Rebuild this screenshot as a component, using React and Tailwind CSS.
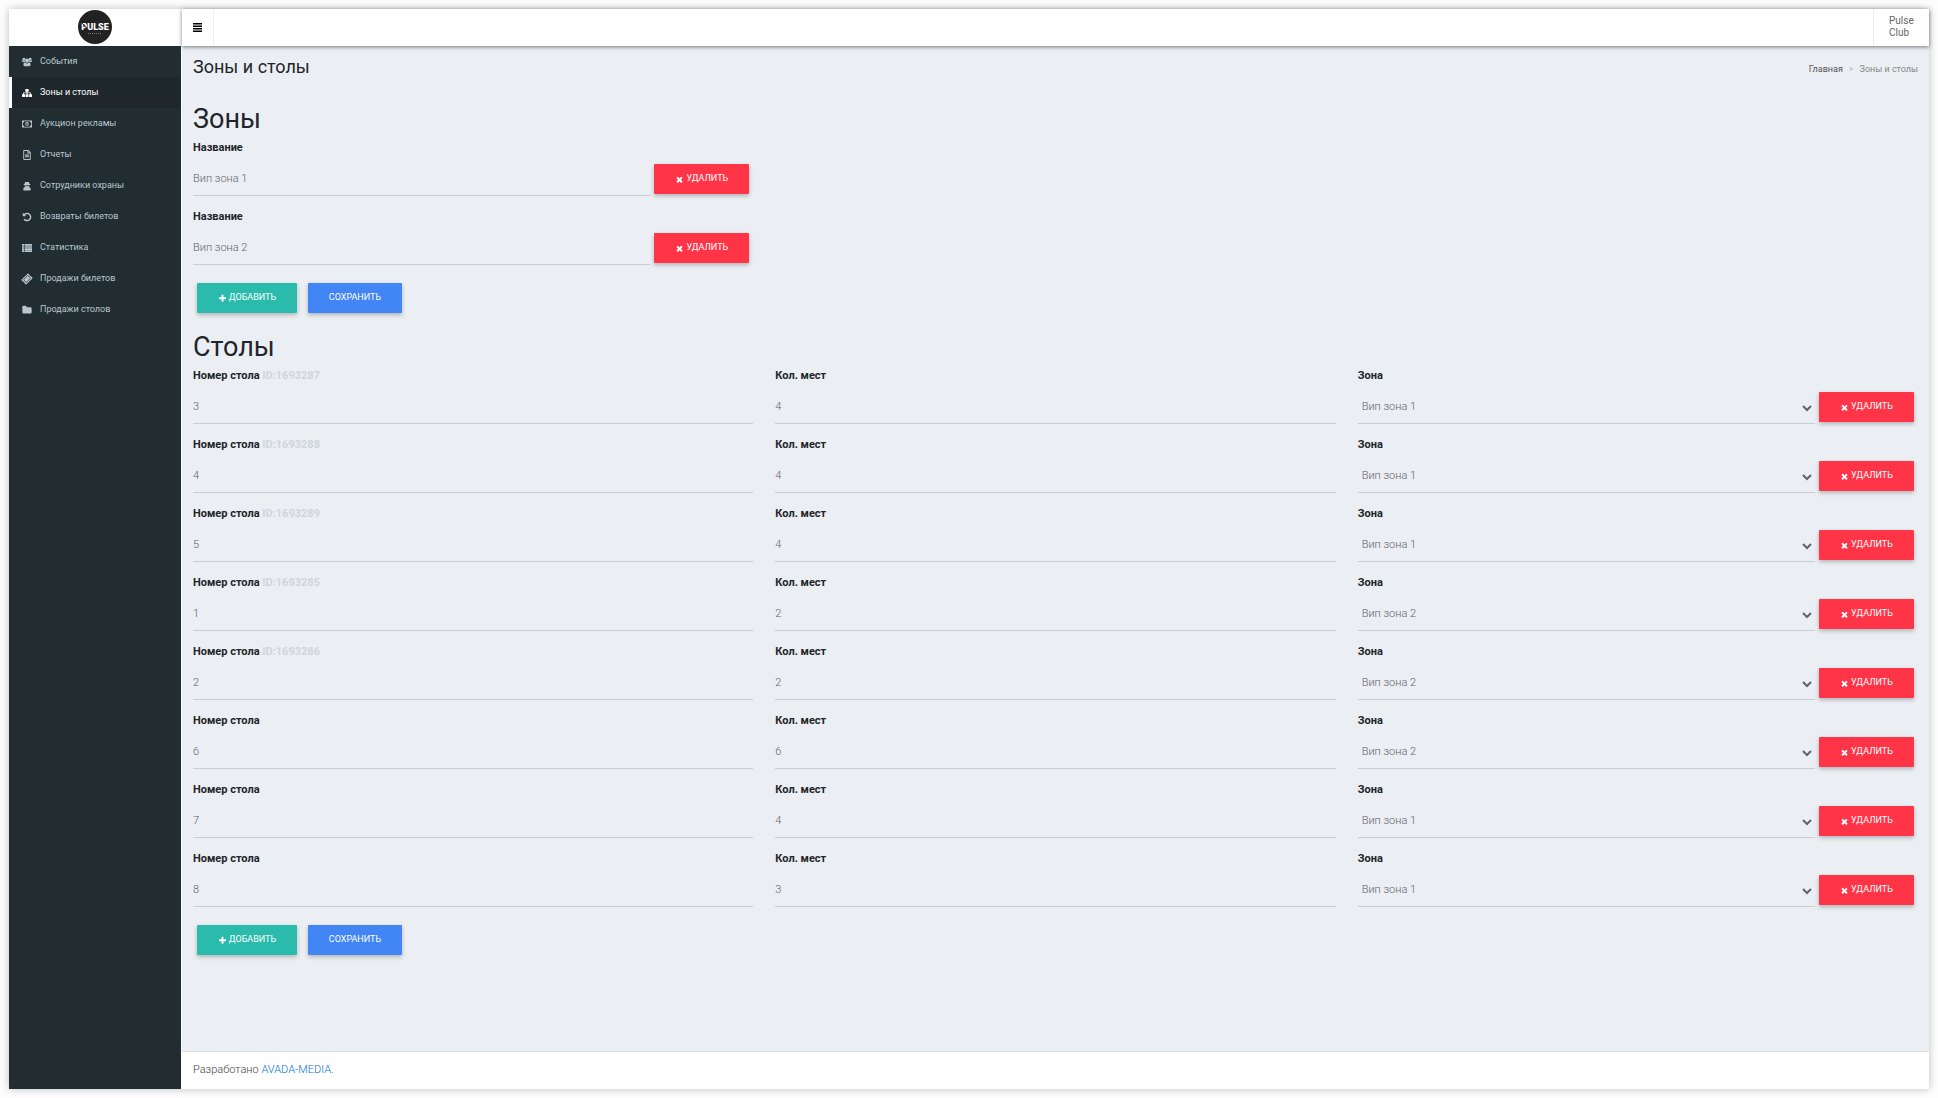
import React, { useState } from 'react';
import { FaRegFileAlt, FaTicketAlt } from 'react-icons/fa';

const Icon = ({ children, className = 'size-[10px]' }) => (
  <svg viewBox="0 0 1792 1792" fill="currentColor" className={className} aria-hidden="true">
    {children}
  </svg>
);

const UsersIcon = () => (
  <Icon>
    <circle cx="896" cy="640" r="370" />
    <circle cx="340" cy="390" r="250" />
    <circle cx="1452" cy="390" r="250" />
    <path d="M500 960q180 190 396 190t396-190q250 90 250 440 0 264-260 264H510q-260 0-260-264 0-350 250-440z" />
    <path d="M0 800q0-190 130-230 200 130 330 60 10 180 110 260H150Q0 890 0 800zM1792 800q0-190-130-230-200 130-330 60-10 180-110 260h420q150 0 150-90z" />
  </Icon>
);

const SitemapIcon = () => (
  <Icon>
    <path d="M660 160h472q60 0 60 60v400q0 60-60 60h-156v140h530q100 0 100 100v200h126q60 0 60 60v356q0 60-60 60h-420q-60 0-60-60v-356q0-60 60-60h134V950H976v170h126q60 0 60 60v356q0 60-60 60H690q-60 0-60-60v-356q0-60 60-60h126V950H346v170h134q60 0 60 60v356q0 60-60 60H60q-60 0-60-60v-356q0-60 60-60h126V920q0-100 100-100h530V680H660q-60 0-60-60V220q0-60 60-60z" />
  </Icon>
);

const MoneyIcon = () => (
  <Icon>
    <path
      fillRule="evenodd"
      d="M0 256h1792v1280H0zM400 400q0 260-250 260v470q250 0 250 260h992q0-260 250-260V660q-250 0-250-260z"
    />
    <path fillRule="evenodd" d="M896 480q300 0 300 416t-300 416-300-416 300-416zM840 660l-130 110 70 80 50-40v250h-90v110h320v-110h-90V660z" />
  </Icon>
);

const SecretIcon = () => (
  <Icon>
    <path d="M600 130q296 90 592 0 110 180 150 400 200 50 200 100 0 60-220 110 0 200-120 330 380 90 380 420 0 214-240 214H450q-240 0-240-214 0-330 380-420-120-130-120-330-220-50-220-110 0-50 200-100 40-220 150-400z" />
    <path d="M560 760h280l56 60 56-60h280q-20 160-170 160-130 0-166-100-36 100-166 100-150 0-170-160z" fill="#222d32" />
  </Icon>
);

const UndoIcon = () => (
  <Icon>
    <path d="M1664 896q0 156-61 298t-164 245-245 164-298 61q-172 0-327-72.5t-264-204.5q-7-10-6.5-22.5t8.5-20.5l137-138q10-9 25-9 16 2 23 12 73 95 179 147t225 52q104 0 198.5-40.5t163.5-109.5 109.5-163.5 40.5-198.5-40.5-198.5-109.5-163.5-163.5-109.5-198.5-40.5q-98 0-188 35.5t-160 101.5l137 138q31 30 14 69-17 40-59 40h-448q-26 0-45-19t-19-45v-448q0-42 40-59 39-17 69 14l130 129q107-101 244.5-156.5t284.5-55.5q156 0 298 61t245 164 164 245 61 298z" />
  </Icon>
);

const ListIcon = () => (
  <Icon>
    <path d="M0 192h380v300H0zM480 192h1312v300H480zM0 562h380v300H0zM480 562h1312v300H480zM0 932h380v300H0zM480 932h1312v300H480zM0 1302h380v300H0zM480 1302h1312v300H480z" />
  </Icon>
);

const FolderIcon = () => (
  <Icon>
    <path d="M1728 608v704q0 92-66 158t-158 66h-1216q-92 0-158-66t-66-158v-960q0-92 66-158t158-66h320q92 0 158 66t66 158v32h672q92 0 158 66t66 158z" />
  </Icon>
);

const FileIcon = () => <FaRegFileAlt className="size-[10px]" />;

const TicketIcon = () => <FaTicketAlt className="size-[10px] -rotate-45" />;

const PlusIcon = () => (
  <Icon className="size-[9px]">
    <path d="M1600 736v192q0 40-28 68t-68 28h-416v416q0 40-28 68t-68 28h-192q-40 0-68-28t-28-68v-416h-416q-40 0-68-28t-28-68v-192q0-40 28-68t68-28h416v-416q0-40 28-68t68-28h192q40 0 68 28t28 68v416h416q40 0 68 28t28 68z" />
  </Icon>
);

const TimesIcon = () => (
  <Icon className="size-[9px]">
    <path d="M1490 1322q0 40-28 68l-136 136q-28 28-68 28t-68-28l-294-294-294 294q-28 28-68 28t-68-28l-136-136q-28-28-28-68t28-68l294-294-294-294q-28-28-28-68t28-68l136-136q28-28 68-28t68 28l294 294 294-294q28-28 68-28t68 28l136 136q28 28 28 68t-28 68l-294 294 294 294q28 28 28 68z" />
  </Icon>
);

const menuItems = [
  { title: 'События', icon: UsersIcon },
  { title: 'Зоны и столы', icon: SitemapIcon, active: true },
  { title: 'Аукцион рекламы', icon: MoneyIcon },
  { title: 'Отчеты', icon: FileIcon },
  { title: 'Сотрудники охраны', icon: SecretIcon },
  { title: 'Возвраты билетов', icon: UndoIcon },
  { title: 'Статистика', icon: ListIcon },
  { title: 'Продажи билетов', icon: TicketIcon },
  { title: 'Продажи столов', icon: FolderIcon },
];

const initialZones = [
  { id: 1, name: 'Вип зона 1' },
  { id: 2, name: 'Вип зона 2' },
];

const initialTables = [
  { key: 1, id: '1693287', number: '3', seats: '4', zone: '1' },
  { key: 2, id: '1693288', number: '4', seats: '4', zone: '1' },
  { key: 3, id: '1693289', number: '5', seats: '4', zone: '1' },
  { key: 4, id: '1693285', number: '1', seats: '2', zone: '2' },
  { key: 5, id: '1693286', number: '2', seats: '2', zone: '2' },
  { key: 6, number: '6', seats: '6', zone: '2' },
  { key: 7, number: '7', seats: '4', zone: '1' },
  { key: 8, number: '8', seats: '3', zone: '1' },
];

const rowClass = 'grid h-[69px] grid-cols-3 gap-x-[22px] pt-[3px]';
const fieldClass =
  'block w-full h-8 border-b border-[#c9cdd1] bg-transparent pb-[3px] text-[11px] font-light text-[#5f656b] outline-none';
const labelClass = 'block text-[11px] leading-4 font-bold text-[#212529]';
const buttonClass =
  'flex h-[30px] shrink-0 items-center justify-center gap-[2px] rounded-[1px] text-[9px] text-white uppercase shadow-[0_2px_4px_rgba(0,0,0,0.25)]';

const Logo = () => (
  <svg width="34" height="34" viewBox="0 0 34 34" role="img" aria-label="Pulse">
    <circle cx="17" cy="17" r="17" fill="#222" />
    <text x="17" y="20" textAnchor="middle" fill="#fff" fontSize="9" fontWeight="900" fontFamily="Roboto, sans-serif">
      PULSE
    </text>
    <path d="M4 13l6 7" stroke="#222" strokeWidth="1" />
    <path d="M10 23.5h14" stroke="#777" strokeWidth="1" strokeDasharray="1 1" />
  </svg>
);

const Sidebar = () => (
  <aside className="flex w-[173px] shrink-0 flex-col border-r border-white bg-[#222d32]">
    <a href="#" className="flex h-[37px] items-center justify-center bg-white pb-px">
      <Logo />
    </a>
    <nav>
      <ul>
        {menuItems.map(({ title, icon: ItemIcon, active }) => (
          <li key={title}>
            <a
              href="#"
              className={`flex h-[31px] items-center gap-2 border-l-3 pl-[10px] text-[9px] ${
                active ? 'border-white bg-[#1e282c] text-white' : 'border-transparent text-[#b8c7ce]'
              }`}
            >
              <ItemIcon />
              {title}
            </a>
          </li>
        ))}
      </ul>
    </nav>
  </aside>
);

const DeleteButton = ({ onClick }) => (
  <button type="button" onClick={onClick} className={`${buttonClass} w-[95px] bg-[#ff3547]`}>
    <TimesIcon />
    Удалить
  </button>
);

const FormActions = ({ onAdd }) => (
  <div className="flex gap-[11px] pt-2 pl-1">
    <button type="button" onClick={onAdd} className={`${buttonClass} w-[100px] bg-[#2bbbad]`}>
      <PlusIcon />
      Добавить
    </button>
    <button type="submit" className={`${buttonClass} w-[94px] bg-[#4285f4]`}>
      Сохранить
    </button>
  </div>
);

const TextField = ({ id, label, value, onChange }) => (
  <div>
    <label htmlFor={id} className={labelClass}>
      {label}
    </label>
    <div className="pt-2">
      <input id={id} type="text" value={value} onChange={(e) => onChange(e.target.value)} className={fieldClass} />
    </div>
  </div>
);

const App = () => {
  const [zones, setZones] = useState(initialZones);
  const [tables, setTables] = useState(initialTables);

  const updateZone = (id, name) => {
    setZones(zones.map((zone) => (zone.id === id ? { ...zone, name } : zone)));
  };

  const updateTable = (key, field, value) => {
    setTables(tables.map((table) => (table.key === key ? { ...table, [field]: value } : table)));
  };

  const handleSubmit = (e) => e.preventDefault();

  return (
    <div className="min-h-screen bg-[#fdfdfd] p-[9px] font-[Roboto,sans-serif]">
      <div className="flex min-h-[calc(100vh-18px)] shadow-[0_0_8px_rgba(0,0,0,0.25)]">
        <Sidebar />

        <div className="flex min-w-0 flex-1 flex-col bg-[#ebeef3]">
          <header className="flex h-[37px] items-stretch justify-between bg-white shadow-[0_1px_4px_rgba(0,0,0,0.5)]">
            <button type="button" aria-label="Меню" className="border-r border-[#eee] px-[11px] text-black">
              <svg viewBox="0 0 9 9" fill="currentColor" className="size-[9px]" aria-hidden="true">
                <path d="M0 0h9v1.4H0zM0 2.5h9v1.4H0zM0 5h9v1.4H0zM0 7.5h9v1.4H0z" />
              </svg>
            </button>
            <a
              href="#"
              className="flex w-14 items-center border-l border-[#eee] pb-[2px] pl-[15px] text-[10px] leading-3 text-[#666]"
            >
              Pulse
              <br />
              Club
            </a>
          </header>

          <main className="flex-1 px-[11px]">
            <div className="flex justify-between pt-[9px]">
              <h1 className="text-[18px] leading-6 text-[#212529]">Зоны и столы</h1>
              <nav className="flex gap-[6px] pt-2 text-[9px] leading-3">
                <a href="#" className="text-[#555]">
                  Главная
                </a>
                <span className="text-[#bbb]">&gt;</span>
                <span className="text-[#888]">Зоны и столы</span>
              </nav>
            </div>

            <form onSubmit={handleSubmit} className="pt-[22px]">
              <h2 className="text-[27px] leading-9 text-[#212529]">Зоны</h2>
              {zones.map((zone) => (
                <div key={zone.id} className={rowClass}>
                  <div className="flex items-end gap-1 self-start pr-1">
                    <div className="flex-1">
                      <TextField
                        id={`zone-${zone.id}`}
                        label="Название"
                        value={zone.name}
                        onChange={(value) => updateZone(zone.id, value)}
                      />
                    </div>
                    <div className="pb-[2px]">
                      <DeleteButton onClick={() => setZones(zones.filter((z) => z.id !== zone.id))} />
                    </div>
                  </div>
                </div>
              ))}
              <FormActions onAdd={() => setZones([...zones, { id: Date.now(), name: '' }])} />
            </form>

            <form onSubmit={handleSubmit} className="pt-4">
              <h2 className="text-[27px] leading-9 text-[#212529]">Столы</h2>
              {tables.map((table) => (
                <div key={table.key} className={rowClass}>
                  <TextField
                    id={`number-${table.key}`}
                    label={
                      <>
                        Номер стола {table.id && <span className="text-[#d0d5db]">ID:{table.id}</span>}
                      </>
                    }
                    value={table.number}
                    onChange={(value) => updateTable(table.key, 'number', value)}
                  />
                  <TextField
                    id={`seats-${table.key}`}
                    label="Кол. мест"
                    value={table.seats}
                    onChange={(value) => updateTable(table.key, 'seats', value)}
                  />
                  <div className="flex items-end gap-1 self-start pr-1">
                    <div className="flex-1">
                      <label htmlFor={`table-zone-${table.key}`} className={labelClass}>
                        Зона
                      </label>
                      <div className="pt-2">
                        <select
                          id={`table-zone-${table.key}`}
                          value={table.zone}
                          onChange={(e) => updateTable(table.key, 'zone', e.target.value)}
                          className={fieldClass}
                        >
                          {zones.map((zone) => (
                            <option key={zone.id} value={zone.id}>
                              {zone.name}
                            </option>
                          ))}
                        </select>
                      </div>
                    </div>
                    <div className="pb-[2px]">
                      <DeleteButton onClick={() => setTables(tables.filter((t) => t.key !== table.key))} />
                    </div>
                  </div>
                </div>
              ))}
              <FormActions
                onAdd={() => setTables([...tables, { key: Date.now(), number: '', seats: '', zone: '1' }])}
              />
            </form>
          </main>

          <footer className="flex h-[38px] items-center border-t border-[#d9dee4] bg-white pl-[11px] text-[11px] font-light text-[#444]">
            <p>
              Разработано{' '}
              <a href="#" className="text-[#0275d8]">
                AVADA-MEDIA.
              </a>
            </p>
          </footer>
        </div>
      </div>
    </div>
  );
};

export default App;
